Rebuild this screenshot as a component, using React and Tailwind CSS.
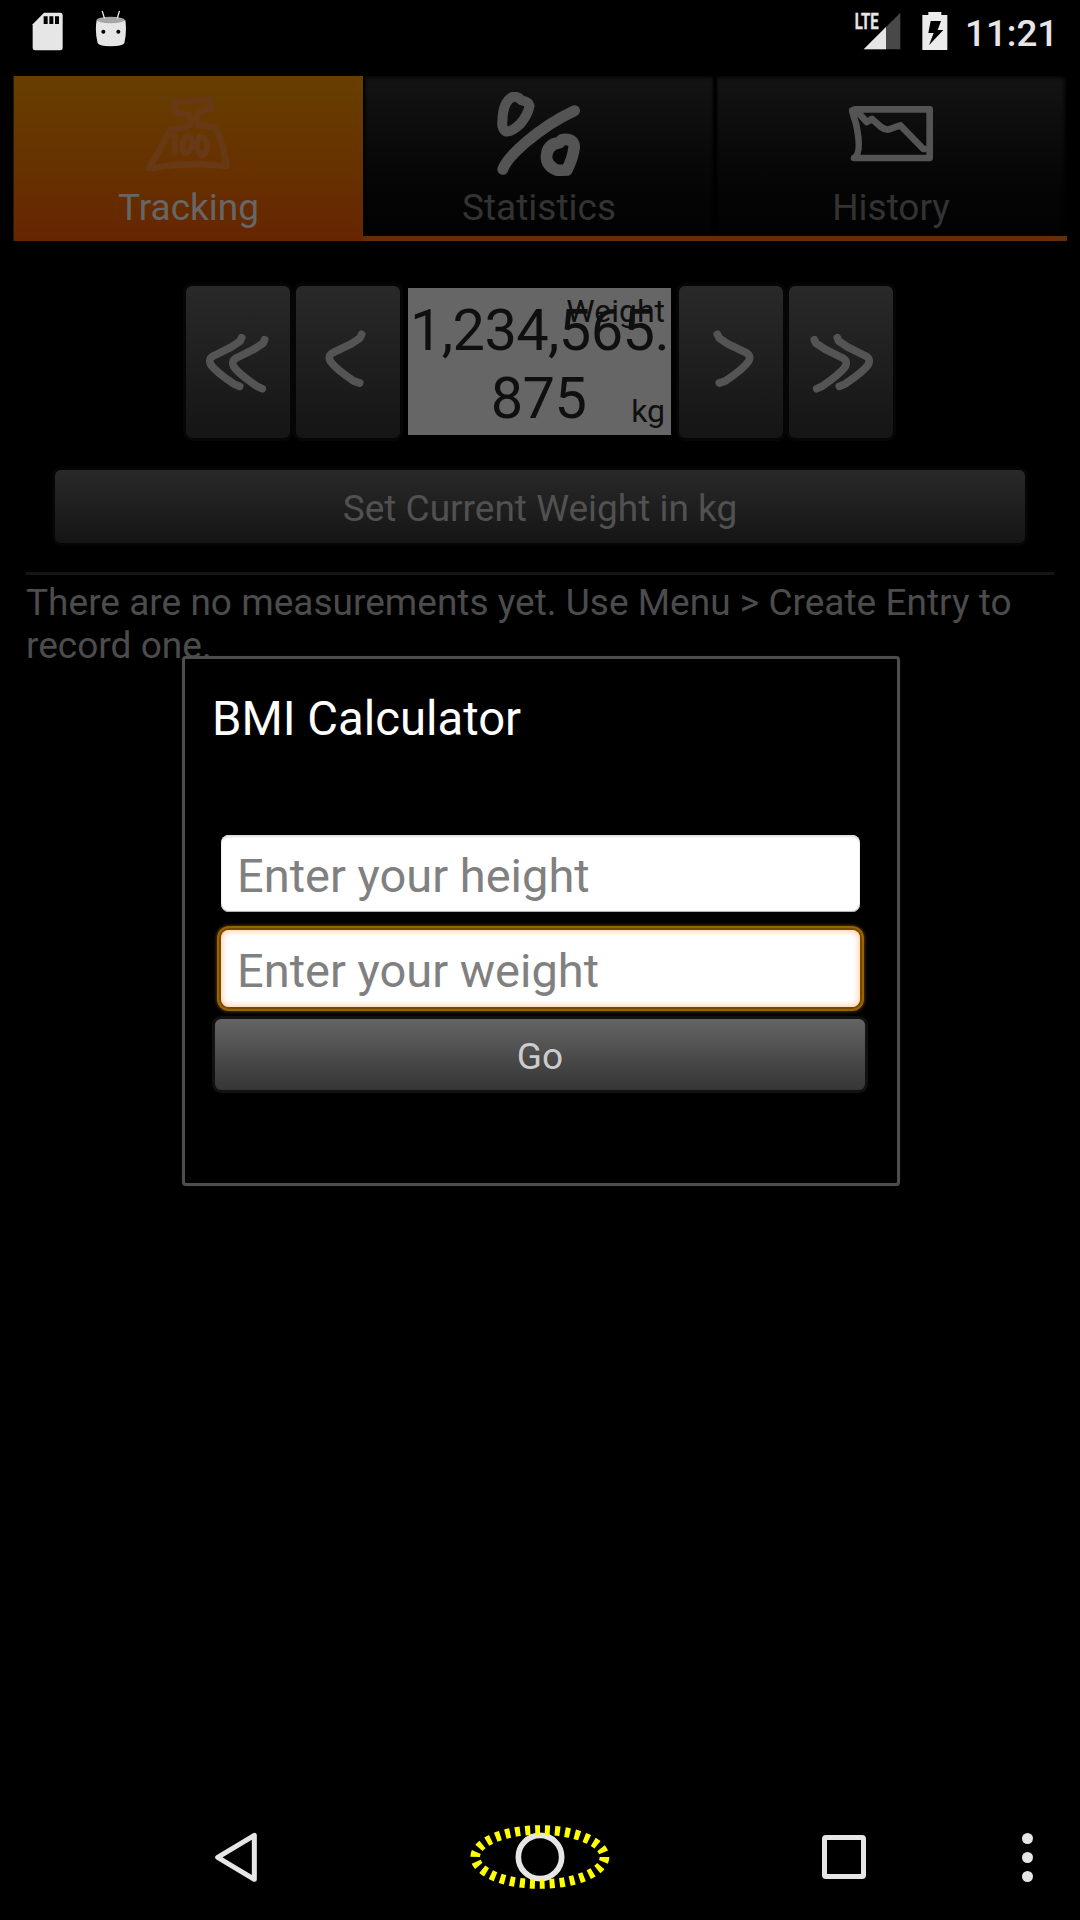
import React from "react";

function StatusBar() {
  return (
    <div className="flex h-[76px] items-start">
      <svg className="ml-8 mt-3 h-[40px] w-[31px]" viewBox="0 0 93 120">
        <path d="M36 2H85Q92 2 92 9V108Q92 115 85 115H9Q2 115 2 108V37Z" fill="#e6e6e6" />
        <path d="M35 13h12v23H35zM52 13h12v23H52zM69 13h12v23H69z" fill="#000" />
      </svg>
      <svg className="ml-8 mt-[10px] h-[38px] w-[32px]" viewBox="284 30 96 114">
        <path d="M289 60Q332 75 375 60Q380 95 372 130Q366 139 331 139Q298 139 292 130Q283 95 289 60Z" fill="#e6e6e6" />
        <ellipse cx="331" cy="60" rx="42" ry="10" fill="#a6a6a6" />
        <path d="M306 34L312 54M357 34L351 54" stroke="#e6e6e6" strokeWidth="4" strokeLinecap="round" />
        <circle cx="309" cy="95" r="6" fill="#000" />
        <circle cx="354" cy="95" r="6" fill="#000" />
      </svg>
      <svg className="ml-[724px] h-[52px] w-[50px] overflow-visible" viewBox="393 0 150 156">
        <path d="M431 148L541 38V148Z" fill="#484848" />
        <path d="M431 148L498 81V148Z" fill="#e6e6e6" />
        <path d="M400 30H482V92H400Z" fill="#000" />
        <text x="404" y="87" fontSize="66" fontWeight="700" fontFamily="Roboto" fill="#e6e6e6" stroke="#e6e6e6" strokeWidth="1" textLength="72" lengthAdjust="spacingAndGlyphs">LTE</text>
      </svg>
      <svg className="ml-[21px] mt-3 h-[38px] w-[26px]" viewBox="605 36 78 114">
        <path d="M606 45H624V36H663V45H681V150H606Z" fill="#ebebeb" />
        <path d="M631 63H662L652 90H669L626 136L640 99H624Z" fill="#000" />
      </svg>
      <span className="ml-[17px] mt-[12px] whitespace-nowrap text-[36.75px] font-medium leading-[44px] text-[#e6e6e6]">11:21</span>
    </div>
  );
}

function Tabs() {
  return (
    <div className="mx-[13px] flex h-[165px]">
      <div className="flex h-[165px] w-[350px] flex-col items-center border-l border-l-[#2a1800] bg-linear-to-b from-[#673f00] to-[#662500]">
        <svg className="mr-[1px] mt-[20px] h-[77px] w-[86px]" viewBox="435 288 258 231" fill="none" stroke="#683915" strokeWidth="19" strokeLinejoin="round" strokeLinecap="round">
          <path d="M522 306L628 299L632 326L598 334Q582 360 596 374L645 384Q665 410 680 498L600 492L520 495L448 505L512 388Q565 384 572 372Q572 350 562 342L526 338Z" />
          <path d="M515 405L525 408V458M563 407C545 415 542 452 556 460C578 458 586 412 563 407ZM600 408C588 425 588 460 606 466C628 460 626 418 600 408Z" strokeWidth="18" />
        </svg>
        <span className="mt-[13px] text-[37px] leading-[44px] text-[#666]">Tracking</span>
      </div>
      <div className="flex h-[165px] w-[352px] flex-col items-center border-b-[5px] border-b-[#662d0c] bg-linear-to-b from-[#141414] to-[#020202] shadow-[inset_4px_0_3px_-2px_#000,inset_-2px_0_2px_#000,inset_0_3px_4px_-1px_#080808]">
        <svg className="mr-[2px] mt-4 h-[84px] w-[83px]" viewBox="411 96 248 252" fill="none" stroke="#545454" strokeLinejoin="round" strokeLinecap="round">
          <path d="M456 111Q472 107 484 121Q506 124 508 137Q504 163 480 192Q452 218 436 214Q423 204 427 180Q428 127 456 111Z" strokeWidth="30" />
          <path d="M428 328C440 292 530 205 643 152" strokeWidth="33" />
          <path d="M606 239Q642 234 642 262Q638 295 620 330L592 331Q558 318 559 288Q562 252 598 248Z" strokeWidth="35" />
        </svg>
        <span className="mt-[10px] text-[37px] leading-[44px] text-[#333]">Statistics</span>
      </div>
      <div className="flex h-[165px] w-[352px] flex-col items-center border-b-[5px] border-b-[#662d0c] bg-linear-to-b from-[#141414] to-[#020202] shadow-[inset_2px_0_2px_#000,inset_-4px_0_4px_-2px_#000,inset_0_3px_4px_-1px_#080808]">
        <svg className="mr-[1px] mt-[29px] h-[58px] w-[84px]" viewBox="387 315 252 174" fill="none" stroke="#545454" strokeWidth="20" strokeLinejoin="round">
          <path d="M396 332L405 328H629V474H402Q427 460 408 371L396 332L408 330L440 366L456 357L483 381Q500 394 515 385L541 376L610 447H626" />
        </svg>
        <span className="mt-[23px] text-[37px] leading-[44px] text-[#333]">History</span>
      </div>
    </div>
  );
}

function StepButton({ viewBox, children }) {
  return (
    <div className="h-[152px] w-[104px] rounded-[6px] bg-linear-to-b from-[#292929] to-[#151515] shadow-[0_0_0_3px_#060606]">
      <svg className="h-full w-full" viewBox={viewBox} fill="none" stroke="#545454" strokeWidth="23" strokeLinecap="round" strokeLinejoin="round">
        {children}
      </svg>
    </div>
  );
}

function WeightPicker() {
  return (
    <div className="mt-[45px] flex h-[152px] pl-[186px]">
      <StepButton viewBox="48 48 312 456">
        <path d="M215 203L210 214L184 231L134 256Q112 266 123 285Q138 306 192 342L209 349M284 209L279 220L253 237L203 262Q181 272 192 291Q207 312 261 349L277 356" />
      </StepButton>
      <div className="ml-[6px]">
        <StepButton viewBox="378 48 312 456">
          <path d="M575 193L569 205L543 222L493 246Q470 256 482 275Q497 297 551 333L569 339" />
        </StepButton>
      </div>
      <div className="relative ml-2 mt-[2px] h-[147px] w-[263px] bg-[#666] text-[#0f0f0f]">
        <div className="pt-[8px] text-center text-[57.75px] leading-[68px] tracking-[-0.6px]">
          <div className="whitespace-nowrap">1,234,565.</div>
          <div className="pr-[2px]">875</div>
        </div>
        <span className="absolute right-[6px] top-[5px] text-[32px] leading-[36px]">Weight</span>
        <span className="absolute bottom-[6px] right-[6px] text-[32px] leading-[36px]">kg</span>
      </div>
      <div className="ml-2">
        <StepButton viewBox="417 48 312 456">
          <path d="M532 193L538 205L564 222L614 246Q637 256 625 275Q610 297 556 333L538 339" />
        </StepButton>
      </div>
      <div className="ml-[6px]">
        <StepButton viewBox="747 48 312 456">
          <path d="M892 203L897 214L923 231L973 256Q995 266 984 285Q969 306 915 342L898 349M823 209L828 220L854 237L904 262Q926 272 915 291Q900 312 846 349L830 356" />
        </StepButton>
      </div>
    </div>
  );
}

function Dialog() {
  return (
    <div className="absolute left-[182px] top-[656px] h-[530px] w-[718px] rounded-[4px] border-[3px] border-[#4d4d4d] bg-black px-[30px] pt-[32px] text-[47.25px] leading-[56px] shadow-[0_0_1px_#333]">
      <div className="-ml-[3px] text-white">BMI Calculator</div>
      <div className="ml-[6px] mt-[88px] h-[77px] w-[639px] rounded-[8px] bg-white pl-[16px] pt-[13px] text-[47px] text-[#808080] shadow-[inset_0_2px_2px_#ddd,inset_0_-1px_1px_#aaa]">Enter your height</div>
      <div className="ml-[6px] mt-[18px] h-[77px] w-[639px] rounded-[8px] bg-white pl-[16px] pt-[13px] text-[47px] text-[#808080] shadow-[0_0_0_2px_#744900,0_0_0_4px_#996300,0_0_3px_5px_#4b3000,inset_0_0_6px_1px_#ffc99a]">Enter your weight</div>
      <div className="mt-[12px] flex h-[71px] w-[650px] items-center justify-center rounded-[6px] bg-linear-to-b from-[#656565] to-[#353535] text-[37px] text-[#ccc] shadow-[0_0_0_3px_#111]">
        <span className="pt-[5px] leading-[44px]">Go</span>
      </div>
    </div>
  );
}

function NavBar() {
  return (
    <div className="flex h-[126px] items-center pl-[214px]">
      <svg className="h-[50px] w-[44px]" viewBox="102 95 132 150" fill="none" stroke="#e6e6e6" strokeWidth="15" strokeLinejoin="round">
        <path d="M223 105V237L113 171Z" />
      </svg>
      <svg className="ml-[212px] h-[66px] w-[140px]" viewBox="870 72 420 198" fill="none">
        <circle cx="1080" cy="171" r="65" stroke="#e6e6e6" strokeWidth="17" />
        <ellipse cx="1079.5" cy="171" rx="194" ry="81" stroke="#ff0" strokeWidth="29" strokeDasharray="15 15" />
      </svg>
      <div className="ml-[212px] h-[44px] w-[44px] rounded-[4px] border-[5px] border-[#e6e6e6]" />
      <div className="ml-[156px] flex flex-col gap-[8px]">
        <div className="size-[11px] rounded-full bg-[#e6e6e6]" />
        <div className="size-[11px] rounded-full bg-[#e6e6e6]" />
        <div className="size-[11px] rounded-full bg-[#e6e6e6]" />
      </div>
    </div>
  );
}

export default function App() {
  return (
    <div className="relative flex h-[1920px] w-[1080px] flex-col overflow-hidden bg-black font-['Roboto',sans-serif]">
      <StatusBar />
      <Tabs />
      <WeightPicker />
      <div className="mx-[55px] mt-[32px] flex h-[73px] items-center justify-center rounded-[6px] bg-linear-to-b from-[#292929] to-[#151515] text-[37px] leading-[44px] text-[#515151] shadow-[0_0_0_3px_#060606]">
        <span className="pt-[5px]">Set Current Weight in kg</span>
      </div>
      <div className="mx-[26px] mt-[29px] h-[3px] bg-[#151515]" />
      <p className="mx-[26px] mt-[6px] text-[37px] leading-[43px] tracking-[0.02px] text-[#4c4c4c]">
        There are no measurements yet. Use Menu &gt; Create Entry to record one.
      </p>
      <div className="flex-1" />
      <NavBar />
      <Dialog />
    </div>
  );
}
